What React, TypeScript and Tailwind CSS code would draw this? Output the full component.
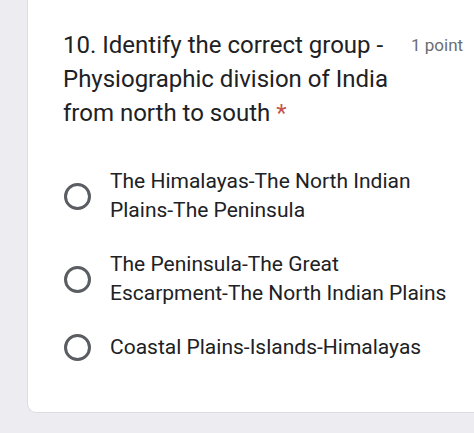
import React from 'react';

const options = [
  ['The Himalayas-The North Indian', 'Plains-The Peninsula'],
  ['The Peninsula-The Great', 'Escarpment-The North Indian Plains'],
  ['Coastal Plains-Islands-Himalayas'],
];

function Radio() {
  return <span className="block w-[27px] h-[27px] rounded-full border-[3px] border-[#5a5d61] shrink-0" />;
}

export default function App() {
  return (
    <div className="w-[474px] h-[433px] bg-[#ececf1] overflow-hidden" style={{ fontFamily: 'Roboto, "Noto Sans", sans-serif' }}>
      <div className="ml-[27px] h-[413px] bg-white rounded-bl-[9px] border-l border-b border-[#dcdce2] pl-[35px] pt-[28px]">
        {/* question header */}
        <div className="flex items-start">
          <h2 className="w-[341px] text-[24px] leading-[34px] text-[#202124] font-normal">
            10. Identify the correct group - Physiographic division of India from north to south{' '}
            <span className="text-[#c5524a]">*</span>
          </h2>
          <span className="ml-[7px] mt-[7px] text-[17px] leading-[20px] text-[#6b6e72]">1 point</span>
        </div>

        {/* options */}
        <div className="mt-[37px] flex flex-col gap-[25px]">
          {options.map((lines, i) => (
            <label key={i} className="flex items-center gap-[19px] text-[21px] leading-[29px] text-[#202124] pl-[1px]">
              <Radio />
              <span>
                {lines.map((l, j) => (
                  <span key={j} className="block whitespace-nowrap">{l}</span>
                ))}
              </span>
            </label>
          ))}
        </div>
      </div>
    </div>
  );
}
